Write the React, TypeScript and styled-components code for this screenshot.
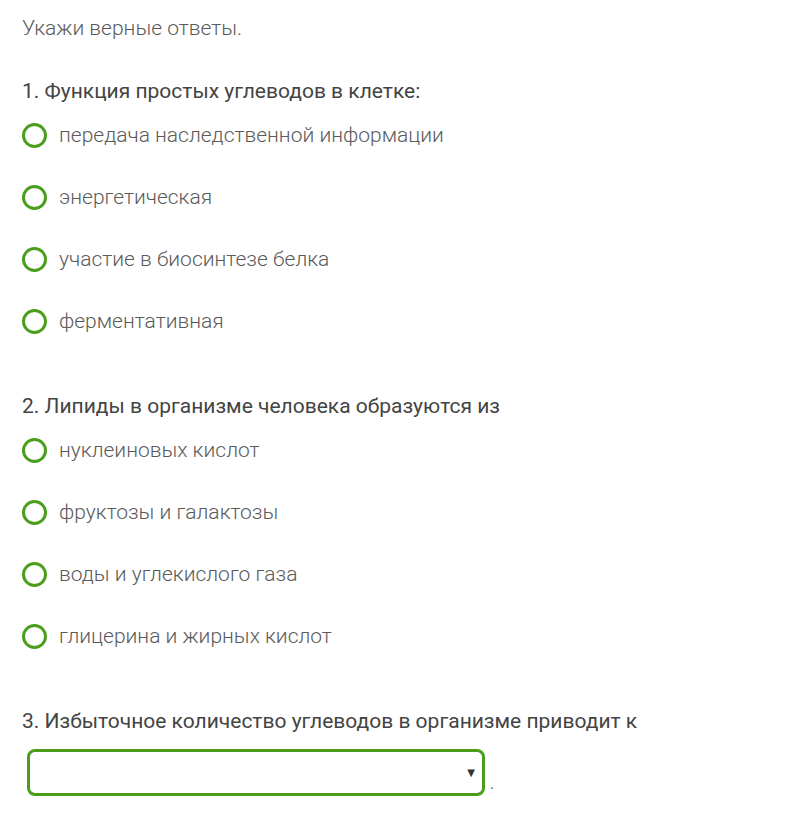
import styled, { createGlobalStyle } from "styled-components";

const GlobalStyle = createGlobalStyle`
  html, body {
    margin: 0;
    padding: 0;
    background: #fff;
  }
  body {
    font-family: Roboto, "Noto Sans", sans-serif;
  }
`;

const Page = styled.div`
  width: 800px;
  height: 838px;
  padding: 14px 0 0 22px;
  box-sizing: border-box;
  display: flex;
  flex-direction: column;
`;

const Intro = styled.p`
  margin: 0 0 35px;
  font-size: 21px;
  line-height: 28px;
  font-weight: 300;
  color: #5a5a5a;
`;

const Question = styled.section`
  display: flex;
  flex-direction: column;
  margin-bottom: 57px;
`;

const Title = styled.h2`
  margin: 0 0 16px;
  font-size: 21px;
  line-height: 28px;
  font-weight: 400;
  color: #444;
`;

const Options = styled.ul`
  list-style: none;
  margin: 0;
  padding: 0;
  display: flex;
  flex-direction: column;
  gap: 34px;
`;

const Option = styled.li`
  display: flex;
  align-items: center;
  gap: 12px;
  height: 28px;
  font-size: 21px;
  font-weight: 300;
  color: #5a5a5a;
`;

const Radio = styled.span`
  width: 19px;
  height: 19px;
  border: 3px solid #4a9e1c;
  border-radius: 50%;
  flex-shrink: 0;
`;

const SelectRow = styled.div`
  display: flex;
  align-items: flex-end;
  gap: 5px;
  padding-left: 5px;
  margin-top: -2px;
`;

const SelectBox = styled.div`
  width: 445px;
  height: 41px;
  border: 3px solid #4a9e1c;
  border-radius: 8px;
  display: flex;
  align-items: center;
  justify-content: flex-end;
  padding-right: 7px;
  box-sizing: content-box;
`;

const Caret = styled.span`
  font-size: 10px;
  color: #333;
  font-family: "DejaVu Sans", sans-serif;
`;

const Dot = styled.span`
  font-size: 16px;
  color: #666;
  line-height: 24px;
`;

const questions = [
  {
    title: "1. Функция простых углеводов в клетке:",
    options: [
      "передача наследственной информации",
      "энергетическая",
      "участие в биосинтезе белка",
      "ферментативная",
    ],
  },
  {
    title: "2. Липиды в организме человека образуются из",
    options: [
      "нуклеиновых кислот",
      "фруктозы и галактозы",
      "воды и углекислого газа",
      "глицерина и жирных кислот",
    ],
  },
];

const App = () => {
  return (
    <>
      <GlobalStyle />
      <Page>
        <Intro>Укажи верные ответы.</Intro>
        {questions.map((q) => (
          <Question key={q.title}>
            <Title>{q.title}</Title>
            <Options>
              {q.options.map((o) => (
                <Option key={o}>
                  <Radio />
                  {o}
                </Option>
              ))}
            </Options>
          </Question>
        ))}
        <Question>
          <Title>3. Избыточное количество углеводов в организме приводит к</Title>
          <SelectRow>
            <SelectBox>
              <Caret>▼</Caret>
            </SelectBox>
            <Dot>.</Dot>
          </SelectRow>
        </Question>
      </Page>
    </>
  );
};

export default App;
